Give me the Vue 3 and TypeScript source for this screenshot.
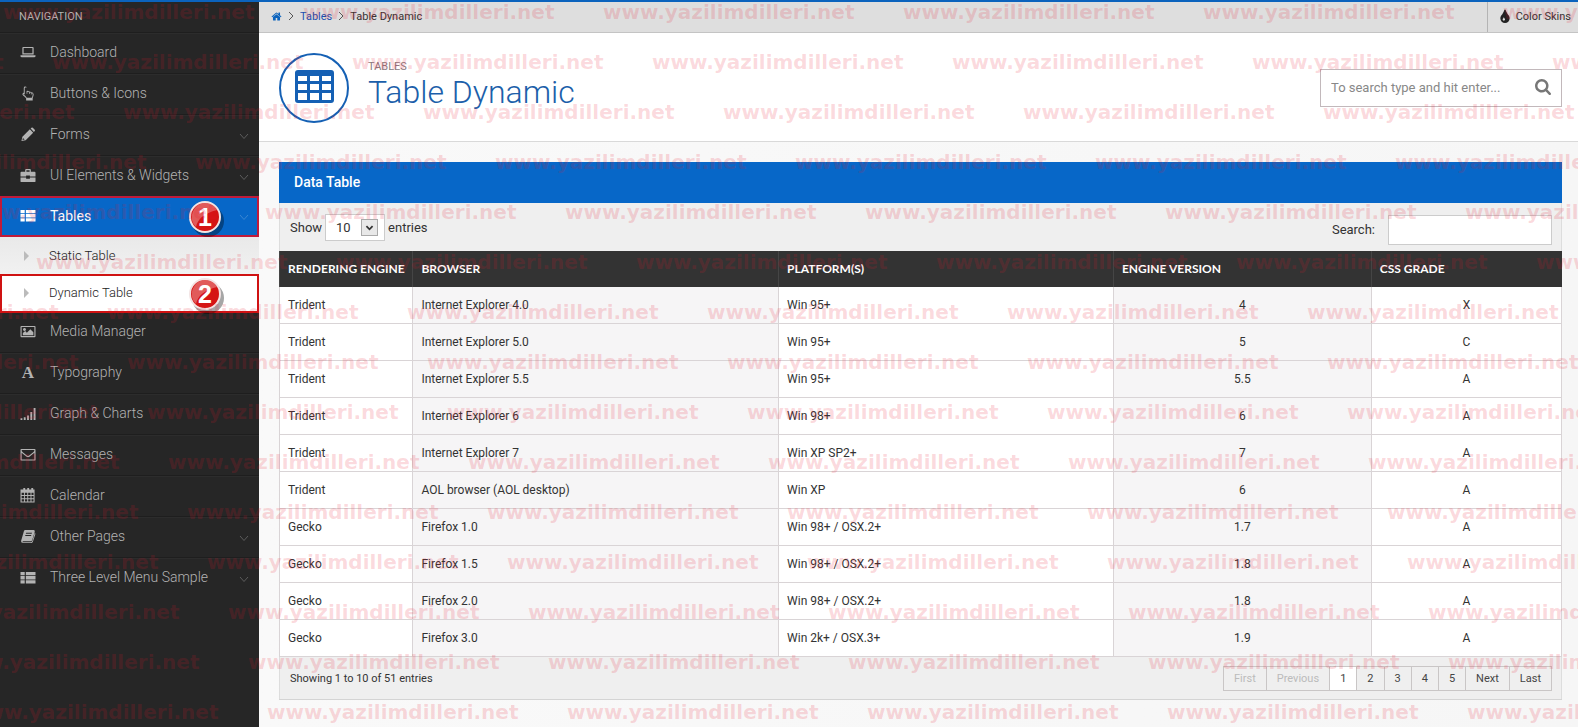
<script setup lang="ts">
import { ref, computed } from 'vue'

interface NavItem {
  label: string
  icon: string
  expandable?: boolean
  active?: boolean
  children?: { label: string; current: boolean }[]
}

interface EngineRow {
  engine: string
  browser: string
  platform: string
  version: string
  grade: string
}

const nav: NavItem[] = [
  { label: 'Dashboard', icon: 'laptop' },
  { label: 'Buttons & Icons', icon: 'hand' },
  { label: 'Forms', icon: 'pencil', expandable: true },
  { label: 'UI Elements & Widgets', icon: 'briefcase', expandable: true },
  {
    label: 'Tables',
    icon: 'list',
    expandable: true,
    active: true,
    children: [
      { label: 'Static Table', current: false },
      { label: 'Dynamic Table', current: true },
    ],
  },
  { label: 'Media Manager', icon: 'image' },
  { label: 'Typography', icon: 'font' },
  { label: 'Graph & Charts', icon: 'signal' },
  { label: 'Messages', icon: 'mail' },
  { label: 'Calendar', icon: 'calendar' },
  { label: 'Other Pages', icon: 'book', expandable: true },
  { label: 'Three Level Menu Sample', icon: 'list', expandable: true },
]

const iconPaths: Record<string, string> = {
  laptop: 'M3 2h10a1 1 0 0 1 1 1v7H2V3a1 1 0 0 1 1-1zM3.300 3.300v5.400h9.400V3.300zM0 11h16v1q0 1-1.500 1h-13Q0 13 0 12z',
  hand: 'M5 0.500q1.500 0 1.500 1.500v3.200q2-.4 2.600.6q1.500-.3 2 .8q2.900-.2 2.900 2.500q0 1.500-1 3.600V15.500H6V13Q4.500 11 2.800 10Q1.500 9 2.400 7.600q.6-.6 1.100-.4V2Q3.500.5 5 .5zM5 1.600q-.5 0-.5.5v7L3.400 8.400q-.6.2-.1.700Q5.500 10.500 6.700 12.500H12q1-2 1-3.500q0-1.700-1.200-1.300v1.300h-.7V7.400q-.4-.9-1.300-.4v1.500h-.7V6.800q-.6-.9-1.800-.3v1.800h-.8V2.100q0-.5-.5-.5z',
  pencil: 'M1 15l1-4.500L10 2.500l3.500 3.500l-8 8zM10.800 1.700l.9-.9q.7-.6 1.400 0l2.100 2.100q.6.7 0 1.400l-.9.900zM2.600 11.600l-.5 2.300l2.300-.5z',
  briefcase: 'M5 4V2q0-1 1-1h4q1 0 1 1v2h4q1 0 1 1v4H10V8H6v1H0V5q0-1 1-1zM6.300 4h3.400V2.300H6.300zM0 10h6v1.500h4V10h6v4q0 1-1 1H1q-1 0-1-1z',
  list: 'M0 2h4.500v3.500H0zM5.700 2H16v3.500H5.700zM0 6.500h4.500V10H0zM5.700 6.500H16V10H5.700zM0 11h4.500v3.500H0zM5.700 11H16v3.500H5.700z',
  image: 'M1 2h14q1 0 1 1v10q0 1-1 1H1q-1 0-1-1V3q0-1 1-1zM1.200 3.200v9.600h13.600V3.200zM4.300 4.200a1.600 1.600 0 1 1-.1 0zM2.500 12V9.500L5 7.500l1.800 1.700L10.500 5.500l3.200 3.200V12z',
  signal: 'M0 13h2v2H0zM3.500 12h2v3h-2zM7 10h2v5H7zM10.500 6.500h2V15h-2zM14 2h2v13h-2z',
  mail: 'M1 2h14q1 0 1 1v10.500q0 1-1 1H1q-1 0-1-1V3q0-1 1-1zM1.200 3.200q0 1.300 1.200 2.300L6.800 9q1.200 1 2.400 0l4.400-3.500q1.200-1 1.200-2.300zM1.200 6.200v7.100h13.600V6.200L9.500 10.400q-1.500 1-3 0z',
  calendar: 'M3 0h2v1.500h2.200V0h2v1.500h2.300V0h2v1.500h1.500v14H0v-14h3zM1.200 5v2.500h2.500V5zM4.700 5v2.500h2.500V5zM8.200 5v2.500h2.500V5zM11.700 5v2.500h2.200V5zM1.200 8.500V11h2.500V8.500zM4.700 8.500V11h2.500V8.500zM8.200 8.500V11h2.500V8.500zM11.700 8.500V11h2.200V8.500zM1.200 12v2.300h2.500V12zM4.700 12v2.300h2.500V12zM8.200 12v2.300h2.500V12zM11.700 12v2.300h2.200V12z',
  book: 'M5 1h9q1.600.3 1.200 1.800L12.400 12q-.4 1-1.500 1H3.100q-1.200 0-.9 1H11q1.200 0 1.600-1.200L15.300 4q.8.600.5 1.500l-2.600 8.200Q12.700 15 11.300 15H2.700Q.5 15 .6 12.700L3.600 2.500Q4 1 5 1zM6 4l-.4 1.100h6.300l.4-1.100zM5.300 6.400l-.4 1.100h6.300l.4-1.100z',
}

const columns = ['Rendering engine', 'Browser', 'Platform(s)', 'Engine version', 'CSS grade']

const rows: EngineRow[] = [
  { engine: 'Trident', browser: 'Internet Explorer 4.0', platform: 'Win 95+', version: '4', grade: 'X' },
  { engine: 'Trident', browser: 'Internet Explorer 5.0', platform: 'Win 95+', version: '5', grade: 'C' },
  { engine: 'Trident', browser: 'Internet Explorer 5.5', platform: 'Win 95+', version: '5.5', grade: 'A' },
  { engine: 'Trident', browser: 'Internet Explorer 6', platform: 'Win 98+', version: '6', grade: 'A' },
  { engine: 'Trident', browser: 'Internet Explorer 7', platform: 'Win XP SP2+', version: '7', grade: 'A' },
  { engine: 'Trident', browser: 'AOL browser (AOL desktop)', platform: 'Win XP', version: '6', grade: 'A' },
  { engine: 'Gecko', browser: 'Firefox 1.0', platform: 'Win 98+ / OSX.2+', version: '1.7', grade: 'A' },
  { engine: 'Gecko', browser: 'Firefox 1.5', platform: 'Win 98+ / OSX.2+', version: '1.8', grade: 'A' },
  { engine: 'Gecko', browser: 'Firefox 2.0', platform: 'Win 98+ / OSX.2+', version: '1.8', grade: 'A' },
  { engine: 'Gecko', browser: 'Firefox 3.0', platform: 'Win 2k+ / OSX.3+', version: '1.9', grade: 'A' },
]

const pages = ['First', 'Previous', '1', '2', '3', '4', '5', 'Next', 'Last']
const currentPage = ref('1')
const pageSize = ref('10')
const tableFilter = ref('')
const siteQuery = ref('')

const visibleRows = computed(() => {
  const q = tableFilter.value.trim().toLowerCase()
  return q ? rows.filter((r) => Object.values(r).join(' ').toLowerCase().includes(q)) : rows
})

const isDisabled = (page: string) => currentPage.value === '1' && (page === 'First' || page === 'Previous')

function goTo(page: string) {
  const n = Number(currentPage.value)
  if (page === 'First') currentPage.value = '1'
  else if (page === 'Last') currentPage.value = '5'
  else if (page === 'Next') currentPage.value = String(Math.min(5, n + 1))
  else if (page === 'Previous') currentPage.value = String(Math.max(1, n - 1))
  else currentPage.value = page
}

// Start of the repeating watermark on each line; copies follow every 300 units.
const markStarts = [3, 52, 123, 195, 265, 36, 107, 127, 147, 168, 187, 207, 228, 248, 267]
const marks = markStarts.flatMap((start, line) =>
  [-1, 0, 1, 2, 3, 4, 5].map((n) => ({ key: `${line}:${n}`, x: start + n * 300, y: 19 + line * 50 })),
)
</script>

<template>
  <div class="page">
    <aside class="sidebar">
      <h2 class="nav-title">NAVIGATION</h2>
      <nav aria-label="Main">
        <ul class="nav">
          <li v-for="item in nav" :key="item.label">
            <a href="#" class="nav-link" :class="{ active: item.active }">
              <span v-if="item.icon === 'font'" class="nav-icon letter" aria-hidden="true">A</span>
              <svg v-else class="nav-icon" viewBox="0 0 16 16" aria-hidden="true">
                <path :d="iconPaths[item.icon]" fill-rule="evenodd" />
              </svg>
              <span class="nav-label">{{ item.label }}</span>
              <svg v-if="item.expandable" class="chevron" viewBox="0 0 10 7" aria-hidden="true">
                <path d="M1 1l4 4.500l4-4.500" />
              </svg>
              <svg v-if="item.active" class="badge" viewBox="0 0 40 40" aria-hidden="true">
                <circle cx="21" cy="22" r="16" class="badge-shadow" />
                <circle cx="18" cy="18" r="15" class="badge-disc" />
                <path d="M18 4a14 14 0 0 0-9 24Q11 16 30 11A14 14 0 0 0 18 4z" class="badge-shine" />
                <text x="18" y="27" class="badge-text">1</text>
              </svg>
            </a>
            <ul v-if="item.children" class="subnav">
              <li v-for="child in item.children" :key="child.label">
                <a href="#" class="sub-link" :class="{ current: child.current }">
                  <span class="caret" aria-hidden="true"></span>
                  <span>{{ child.label }}</span>
                  <svg v-if="child.current" class="badge" viewBox="0 0 40 40" aria-hidden="true">
                    <circle cx="21" cy="22" r="16" class="badge-shadow" />
                    <circle cx="18" cy="18" r="15" class="badge-disc" />
                    <path d="M18 4a14 14 0 0 0-9 24Q11 16 30 11A14 14 0 0 0 18 4z" class="badge-shine" />
                    <text x="18" y="27" class="badge-text">2</text>
                  </svg>
                </a>
              </li>
            </ul>
          </li>
        </ul>
      </nav>
    </aside>

    <main class="main">
      <div class="topbar">
        <nav class="crumbs" aria-label="Breadcrumb">
          <a href="#" aria-label="Home">
            <svg class="home" viewBox="0 0 1792 1792" aria-hidden="true">
              <path d="M1472 992v480q0 26-19 45t-45 19h-384v-384h-256v384h-384q-26 0-45-19t-19-45v-480q0-1 .5-3t.5-3l575-474 575 474q1 2 1 6zm223-69l-62 74q-8 9-21 11h-3q-13 0-21-7l-692-577-692 577q-12 8-24 7-13-2-21-11l-62-74q-8-10-7-23.500t11-21.500l719-599q32-26 76-26t76 26l244 204v-195q0-14 9-23t23-9h192q14 0 23 9t9 23v408l219 182q10 8 11 21.500t-7 23.500z" />
            </svg>
          </a>
          <svg class="sep" viewBox="0 0 6 10" aria-hidden="true"><path d="M1 1l4 4l-4 4" /></svg>
          <a href="#">Tables</a>
          <svg class="sep" viewBox="0 0 6 10" aria-hidden="true"><path d="M1 1l4 4l-4 4" /></svg>
          <span>Table Dynamic</span>
        </nav>
        <button type="button" class="skins">
          <svg class="drop" viewBox="384 0 1024 1536" aria-hidden="true">
            <path d="M896 1152q0-36-20-69-1-1-15.500-22.500t-25.500-38-25-44-21-50.500q-4-16-21-16t-21 16q-7 23-21 50.500t-25 44-25.500 38-15.500 22.500q-20 33-20 69 0 53 37.500 90.500t90.500 37.500 90.500-37.500 37.500-90.500zm512-128q0 212-150 362t-362 150-362-150-150-362q0-145 81-275 6-9 62.500-90.500t101-151 99.500-178 83-201.500q9-30 34-47t51-17 51.500 17 33.500 47q28 93 83 201.500t99.500 178 101 151 62.500 90.500q81 127 81 275z" />
          </svg>
          Color Skins
        </button>
      </div>

      <header class="hero">
        <svg class="hero-icon" viewBox="0 0 70 70" aria-hidden="true">
          <circle cx="35" cy="35" r="34" fill="none" stroke="currentColor" stroke-width="2" />
          <path fill="currentColor" fill-rule="evenodd" d="M19 17h33q3 0 3 3v27q0 3-3 3H19q-3 0-3-3V20q0-3 3-3zM19 23v5h9v-5zM31 23v5h9v-5zM43 23v5h9v-5zM19 31v6h9v-6zM31 31v6h9v-6zM43 31v6h9v-6zM19 40v7h9v-7zM31 40v7h9v-7zM43 40v7h9v-7z" />
        </svg>
        <div class="hero-text">
          <p>TABLES</p>
          <h1>Table Dynamic</h1>
        </div>
        <form class="site-search" role="search" @submit.prevent>
          <input v-model="siteQuery" type="text" aria-label="Site search" placeholder="To search type and hit enter..." />
          <button type="submit" aria-label="Search">
            <svg viewBox="64 128 1664 1664" aria-hidden="true">
              <path d="M1216 832q0-185-131.500-316.500t-316.500-131.500-316.500 131.500-131.500 316.500 131.500 316.500 316.500 131.500 316.500-131.500 131.500-316.500zm512 832q0 52-38 90t-90 38q-54 0-90-38l-343-342q-179 124-399 124-143 0-273.500-55.500t-225-150-150-225-55.500-273.500 55.500-273.500 150-225 225-150 273.500-55.500 273.500 55.500 225 150 150 225 55.500 273.500q0 220-124 399l343 343q37 37 37 90z" />
            </svg>
          </button>
        </form>
      </header>

      <section class="panel">
        <h2 class="panel-title">Data Table</h2>
        <div class="tools">
          <label class="length">
            Show
            <span class="select-box">
              <select v-model="pageSize">
                <option>10</option>
                <option>25</option>
                <option>50</option>
              </select>
              <svg class="select-arrow" viewBox="0 0 17 17" aria-hidden="true"><path d="M5 7l3.500 3.500l3.500-3.500" /></svg>
            </span>
            entries
          </label>
          <label class="filter">
            Search:
            <input v-model="tableFilter" type="text" />
          </label>
        </div>

        <table class="data">
          <colgroup>
            <col class="c1" /><col class="c2" /><col class="c3" /><col class="c4" /><col class="c5" />
          </colgroup>
          <thead>
            <tr>
              <th v-for="c in columns" :key="c" scope="col">{{ c }}</th>
            </tr>
          </thead>
          <tbody>
            <tr v-for="(r, i) in visibleRows" :key="i">
              <td>{{ r.engine }}</td>
              <td class="tint">{{ r.browser }}</td>
              <td>{{ r.platform }}</td>
              <td class="tint center">{{ r.version }}</td>
              <td class="center">{{ r.grade }}</td>
            </tr>
          </tbody>
        </table>

        <footer class="panel-foot">
          <p>Showing 1 to 10 of 51 entries</p>
          <div class="pager">
            <button
              v-for="p in pages"
              :key="p"
              type="button"
              :disabled="isDisabled(p)"
              :class="{ on: p === currentPage }"
              @click="goTo(p)"
            >{{ p }}</button>
          </div>
        </footer>
      </section>
    </main>

    <svg class="watermark" aria-hidden="true">
      <text v-for="m in marks" :key="m.key" :x="m.x" :y="m.y">www.yazilimdilleri.net</text>
    </svg>
  </div>
</template>

<style>
body {
  background: #f7f7f7;
}
</style>

<style scoped>
.page {
  position: relative;
  display: grid;
  grid-template-columns: 259px minmax(0, 1fr);
  min-height: 100vh;
  box-sizing: border-box;
  border-top: 2px solid #0b63bd;
  overflow: hidden;
  font-family: Roboto, "Liberation Sans", sans-serif;
  font-size: 12px;
  color: #333;
}
.page *, .page *::before { box-sizing: border-box; }
h1, h2, p, ul { margin: 0; padding: 0; }
ul { list-style: none; }
a { color: inherit; text-decoration: none; }
button, input, select { font: inherit; color: inherit; }

.sidebar { background: #262626; color: #b3b3b3; }
.nav-title {
  height: 30px;
  padding-left: 19px;
  line-height: 29px;
  font-size: 11px;
  font-weight: 400;
}
.nav-link {
  position: relative;
  display: flex;
  align-items: center;
  height: 41px;
  padding: 0 10px 2px 20px;
  border-top: 1px solid #1e1e1e;
  box-shadow: inset 0 1px #2c2c2c;
  font-size: 14px;
  font-weight: 300;
}
.nav-icon { width: 16px; height: 15px; margin-right: 14px; fill: currentColor; }
.letter {
  font: bold 17px/15px "Liberation Serif", serif;
  text-align: center;
}
.nav-label { flex: 1; }
.chevron { width: 10px; height: 7px; margin-top: 4px; fill: none; stroke: #5c5c5c; }
.nav-link.active {
  border: 2px solid #c01a3a;
  box-shadow: none;
  padding: 0 8px 2px 18px;
  background: #0767c8;
  color: #fff;
  font-weight: 400;
}
.nav-link.active .chevron { stroke: #3a86d2; }
.subnav { color: #222; font-size: 13px; font-weight: 300; }
.sub-link {
  position: relative;
  display: flex;
  align-items: center;
  height: 37px;
  padding-left: 24px;
  background: linear-gradient(#e9e9e9, #f1f1f1);
}
.sub-link.current {
  height: 39px;
  margin-bottom: -2px;
  padding: 0 0 2px 22px;
  background: #fff;
  border: 2px solid #cf1212;
  z-index: 1;
}
.caret {
  width: 5px;
  margin-right: 20px;
  border: 5px solid transparent;
  border-left-color: #bbb;
  border-right: 0;
}
.badge {
  position: absolute;
  top: 50%;
  right: 30px;
  width: 40px;
  height: 40px;
  margin-top: -18px;
  overflow: visible;
}
.badge-shadow { fill: #000; opacity: .35; }
.badge-disc { fill: #d51414; stroke: #f3e4e4; stroke-width: 2; }
.badge-shine { fill: #fff; opacity: .3; }
.badge-text {
  fill: #fff;
  font: bold 25px "Liberation Sans", sans-serif;
  text-anchor: middle;
}

.main { background: linear-gradient(90deg, #f9f9f9, #f6f6f6); }
.topbar {
  display: flex;
  justify-content: space-between;
  height: 31px;
  background: #dedede;
  border-bottom: 1px solid #c4c4c4;
  font-size: 11px;
}
.crumbs { display: flex; align-items: center; gap: 6px; padding: 0 0 2px 12px; }
.crumbs a { display: flex; color: #1c50b0; }
.home { width: 11px; height: 11px; fill: #0b63bd; }
.sep { width: 6px; height: 10px; fill: none; stroke: #555; }
.skins {
  display: flex;
  align-items: center;
  gap: 6px;
  padding: 0 7px 2px 12px;
  border: 0;
  border-left: 1px solid #b4b4b4;
  background: none;
}
.drop { width: 10px; height: 14px; fill: #222; }

.hero {
  display: flex;
  align-items: center;
  height: 109px;
  padding: 1px 16px 0 20px;
  background: #fff;
  border-bottom: 1px solid #d9d9d9;
}
.hero-icon { width: 70px; height: 70px; color: #1560b4; }
.hero-text { flex: 1; margin-left: 19px; padding-bottom: 6px; }
.hero-text p { font-size: 11px; line-height: 14px; color: #8a7a80; }
.hero-text h1 { font-size: 32px; line-height: 36px; font-weight: 300; color: #1c5faa; }
.site-search {
  display: flex;
  width: 242px;
  height: 38px;
  border: 1px solid #c2b8bb;
  background: #fff;
}
.site-search input {
  flex: 1;
  min-width: 0;
  padding: 0 0 0 10px;
  border: 0;
  outline: 0;
  background: none;
  font-size: 13px;
}
.site-search input::placeholder { color: #888; }
.site-search button { width: 36px; padding: 2px 0 0; border: 0; background: none; }
.site-search svg { width: 16px; height: 16px; fill: #777; }

.panel { margin: 20px 16px 27px 20px; border-bottom: 1px solid #d4d4d4; background: #efefef; }
.panel-title {
  height: 41px;
  padding-left: 15px;
  line-height: 40px;
  background: #0767c8;
  color: #fff;
  font-size: 14px;
  font-weight: 500;
}
.tools {
  display: flex;
  justify-content: space-between;
  align-items: center;
  height: 48px;
  padding: 0 9px 0 10px;
  border: solid #ddd;
  border-width: 0 1px;
  font-size: 13px;
}
.length { display: flex; align-items: center; gap: 3px; }
.select-box { position: relative; }
.select-box select {
  display: block;
  width: 60px;
  height: 27px;
  padding: 0 10px;
  border: 1px solid #ccc;
  border-radius: 0;
  appearance: none;
  background: #fff;
}
.select-arrow {
  position: absolute;
  top: 5px;
  right: 7px;
  width: 17px;
  height: 17px;
  border: 1px solid #aaa;
  background: #e8e8e8;
  fill: none;
  stroke: #333;
  stroke-width: 2;
  pointer-events: none;
}
.filter { display: flex; align-items: center; gap: 13px; padding-top: 5px; }
.filter input { width: 164px; height: 30px; border: 1px solid #ccc; background: #fff; }

.data { width: 100%; table-layout: fixed; border-collapse: separate; border-spacing: 0; }
.c1 { width: 10.4%; }
.c2 { width: 28.5%; }
.c3 { width: 26.1%; }
.c4 { width: 20.1%; }
.c5 { width: 14.9%; }
.data th {
  height: 36px;
  padding: 0 8px 2px;
  background: #333;
  border-left: 1px solid #454545;
  color: #fff;
  font: bold 12px Lato, sans-serif;
  text-align: left;
  text-transform: uppercase;
  white-space: nowrap;
}
.data td {
  height: 37px;
  padding: 0 8px;
  background: #fff;
  border: solid #d9d4d6;
  border-width: 0 0 1px 1px;
}
.data td:last-child { border-right-width: 1px; }
.data td.tint { background: #f6f5f6; }
.data td.center { text-align: center; }

.panel-foot {
  display: flex;
  justify-content: space-between;
  align-items: center;
  height: 42px;
  padding: 0 9px 0 10px;
  border: solid #ddd;
  border-width: 0 1px;
  font-size: 11px;
}
.pager { display: flex; border: 1px solid #c9c6c6; }
.pager button {
  height: 23px;
  padding: 0 10px;
  border: 0;
  background: none;
  font-size: 11px;
  color: #444;
}
.pager button + button { border-left: 1px solid #c9c6c6; }
.pager .on { background: #fff; }
.pager button:disabled { color: #bbb; }

.watermark {
  position: absolute;
  top: -2px;
  left: 0;
  z-index: 2;
  width: 100%;
  height: 100vh;
  pointer-events: none;
}
.watermark text {
  fill: #e8142c;
  fill-opacity: .17;
  font: bold 20px "DejaVu Sans", sans-serif;
}
</style>
